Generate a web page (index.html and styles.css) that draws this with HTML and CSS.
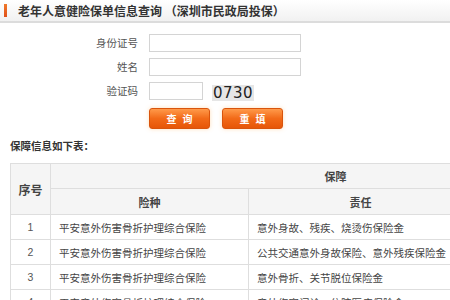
FILE: index.html
```html
<!DOCTYPE html>
<html lang="zh-CN">
<head>
<meta charset="utf-8">
<title>老年人意健险保单信息查询</title>
<link rel="stylesheet" href="styles.css">
</head>
<body>
<div class="titlebar">
  <span class="marker"></span>
  <h1 class="title">老年人意健险保单信息查询 （深圳市民政局投保）</h1>
</div>
<form class="form">
  <label class="lbl">身份证号</label>
  <div class="field"><input class="inp" type="text"></div>
  <label class="lbl">姓名</label>
  <div class="field"><input class="inp" type="text"></div>
  <label class="lbl">验证码</label>
  <div class="field code-row"><input class="inp inp-short" type="text"><span class="captcha">0730</span></div>
  <div class="btns">
    <button type="button" class="btn">查询</button>
    <button type="button" class="btn">重填</button>
  </div>
</form>
<div class="subtitle">保障信息如下表：</div>
<table class="tbl">
  <colgroup>
    <col class="c1"><col class="c2"><col class="c3"><col class="c4">
  </colgroup>
  <thead>
    <tr class="h1"><th rowspan="2" class="seq-h">序号</th><th colspan="3">保障</th></tr>
    <tr class="h2"><th>险种</th><th>责任</th><th>保额</th></tr>
  </thead>
  <tbody>
    <tr><td class="num">1</td><td>平安意外伤害骨折护理综合保险</td><td>意外身故、残疾、烧烫伤保险金</td><td></td></tr>
    <tr><td class="num">2</td><td>平安意外伤害骨折护理综合保险</td><td>公共交通意外身故保险、意外残疾保险金</td><td></td></tr>
    <tr><td class="num">3</td><td>平安意外伤害骨折护理综合保险</td><td>意外骨折、关节脱位保险金</td><td></td></tr>
    <tr><td class="num">4</td><td>平安意外伤害骨折护理综合保险</td><td>意外伤害门诊、住院医疗保险金</td><td></td></tr>
  </tbody>
</table>
</body>
</html>
```

FILE: styles.css
```css
html { overflow: hidden; }
body {
  margin: 0;
  background: #fff;
  font-family: "Noto Sans CJK SC", "Liberation Sans", sans-serif;
  color: #444;
  width: 450px;
  height: 300px;
  overflow: hidden;
}
.titlebar {
  height: 21px;
  display: flex;
  align-items: center;
  background: linear-gradient(#ffffff, #f1f1f1);
  border-bottom: 2px solid #dcdcdc;
  padding-left: 4px;
}
.marker {
  width: 3px;
  height: 13px;
  background: linear-gradient(#f07a2a, #e0501a);
  margin-right: 11px;
}
.title {
  margin: 0;
  font-size: 12px;
  font-weight: bold;
  color: #333;
  line-height: 14px;
}
.form {
  display: grid;
  grid-template-columns: 138px 160px;
  column-gap: 11px;
  row-gap: 6px;
  padding-top: 11px;
  align-items: center;
}
.lbl {
  text-align: right;
  font-size: 10.5px;
  color: #555;
  line-height: 18px;
}
.field { display: flex; align-items: center; height: 18px; }
.inp {
  box-sizing: border-box;
  width: 152px;
  height: 18px;
  border: 1px solid #d4d4d4;
  background: #fff;
  margin: 0;
  padding: 0 2px;
}
.inp-short { width: 54px; }
.code-row { gap: 9px; }
.captcha {
  display: inline-block;
  width: 42px;
  height: 16px;
  margin-top: 3px;
  background: #e6e6e6;
  font-family: "DejaVu Sans", sans-serif;
  font-size: 15px;
  line-height: 16px;
  color: #222;
  text-align: center;
  letter-spacing: 0.5px;
}
.btns {
  grid-column: 2;
  display: flex;
  gap: 12px;
  margin-top: 2px;
}
.btn {
  width: 61px;
  height: 21px;
  border: 1px solid #d9540c;
  border-radius: 3px;
  background: linear-gradient(#ff9a4a, #f26a18 50%, #e65608);
  color: #fff;
  font-family: "Noto Sans CJK SC", sans-serif;
  font-size: 10px;
  font-weight: bold;
  letter-spacing: 6px;
  text-indent: 6px;
  padding: 0;
  box-shadow: 0 0 4px rgba(255, 160, 60, 0.35);
}
.subtitle {
  margin: 10px 0 0 10px;
  font-size: 10.5px;
  font-weight: bold;
  color: #333;
  line-height: 14px;
}
.tbl {
  margin: 10px 0 0 10px;
  border-collapse: collapse;
  table-layout: fixed;
  width: 610px;
  font-size: 10.5px;
}
.c1 { width: 40px; }
.c2 { width: 198px; }
.c3 { width: 224px; }
.c4 { width: 148px; }
.tbl th, .tbl td {
  border: 1px solid #dedede;
  padding: 0 8px;
}
.tbl th {
  background: #f5f5f5;
  font-weight: bold;
  color: #444;
  font-size: 11px;
  text-align: center;
}
.h1 th { height: 24px; }
.h2 th { height: 25px; }
.tbl th.seq-h { font-size: 12px; padding: 0; }
.tbl td {
  height: 24px;
  color: #444;
  white-space: nowrap;
}
.tbl td.num { text-align: center; padding: 0; color: #555; font-family: "Liberation Sans", sans-serif; }
```
